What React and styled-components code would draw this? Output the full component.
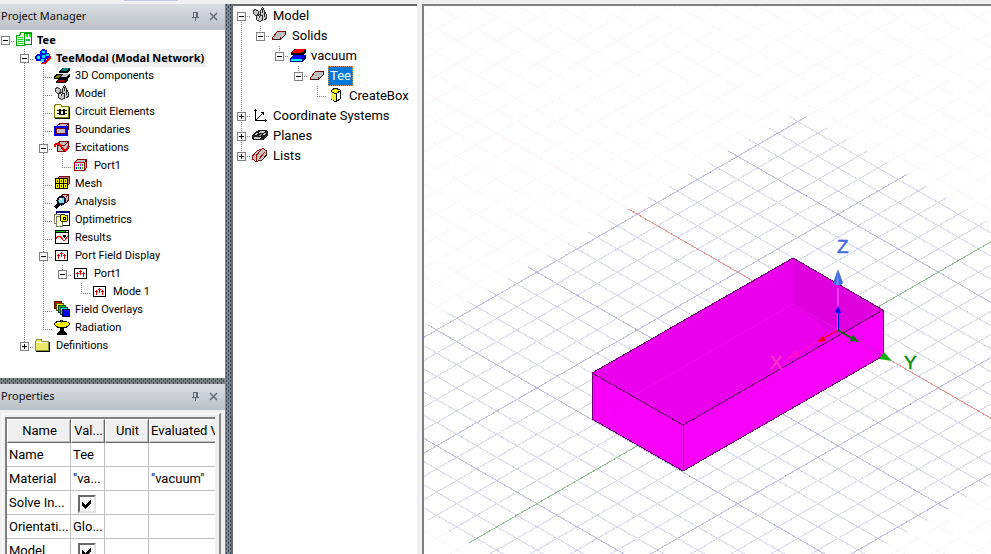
import React from "react";
import styled, { createGlobalStyle, css } from "styled-components";

const GlobalStyle = createGlobalStyle`
  * { box-sizing: border-box; }
  html, body { margin: 0; padding: 0; }
  body { background: #f0f0f0; color: #000; overflow: hidden; }
`;

const titleFont = `"Noto Sans", "Open Sans", sans-serif`;
const uiFont = `Roboto, "Noto Sans", sans-serif`;

const Shell = styled.div`
  display: flex;
  flex-direction: column;
  height: 100vh;
  overflow: hidden;
  background: #f0f0f0;
  font-family: ${uiFont};
`;

const TopStrip = styled.header`
  flex: 0 0 4px;
  padding-left: 124px;
`;

const TopStripTab = styled.div`
  width: 54px;
  height: 1px;
  background: #c5cae2;
`;

const Workspace = styled.main`
  flex: 1;
  min-height: 0;
  display: flex;
`;

const Dock = styled.div`
  flex: 0 0 225px;
  min-width: 0;
  display: flex;
  flex-direction: column;
`;

const Splitter = styled.div`
  flex: 0 0 6px;
  background-color: #808588;
  background-image:
    conic-gradient(from 270deg at 1px 2px, #34465c 25%, transparent 0),
    conic-gradient(from 270deg at 1px 2px, #34465c 25%, transparent 0);
  background-size: 4px 4px;
  background-position: 1px 0, 3px 2px;
`;

const Panel = styled.section`
  flex: ${(p) => (p.$height ? `0 0 ${p.$height}px` : "1")};
  min-height: 0;
  display: flex;
  flex-direction: column;
  overflow: hidden;
`;

const PanelTitle = styled.div`
  flex: 0 0 26px;
  display: flex;
  align-items: center;
  gap: 7px;
  padding: 0 6px 2px 1px;
  background: linear-gradient(#dadde1, #bcc1c6);
`;

const PanelHeading = styled.h2`
  flex: 1;
  margin: 0;
  font-family: ${titleFont};
  font-size: 11px;
  font-weight: 400;
  line-height: 18px;
  color: #101010;
  white-space: nowrap;
`;

const TitleButton = styled.button`
  display: flex;
  width: 11px;
  height: 11px;
  padding: 0;
  border: 0;
  background: none;
  align-items: center;
  justify-content: center;
`;

const ProjectBody = styled.div`
  flex: 1;
  min-height: 0;
  padding-top: 1px;
  overflow: hidden;
  background: #fff;
`;

const Tree = styled.ul`
  list-style: none;
  margin: 0 0 0 ${(p) => (p.$wide ? "-1px" : "-4px")};
  padding: 0;
  font-size: ${(p) => (p.$wide ? "13px" : "11px")};
  --row: ${(p) => (p.$wide ? "20px" : "18px")};
`;

const Branch = styled.ul`
  list-style: none;
  margin: 0;
  padding: 0;
`;

const Row = styled.div`
  display: flex;
  height: var(--row);
  line-height: var(--row);
  white-space: nowrap;
`;

const dotsV = "repeating-linear-gradient(to bottom, #808080 0 1px, transparent 1px 2px)";
const dotsH = "repeating-linear-gradient(to right, #808080 0 1px, transparent 1px 2px)";

const guideImages = {
  none: css`background-image: none;`,
  line: css`
    background-image: ${dotsV};
    background-size: 1px 100%;
    background-position: 9px 0;
  `,
  dash: css`
    background-image: ${dotsH};
    background-size: 10px 1px;
    background-position: 9px 10px;
  `,
  tee: css`
    background-image: ${dotsV}, ${dotsH};
    background-size: 1px 100%, 10px 1px;
    background-position: 9px 0, 9px 10px;
  `,
  end: css`
    background-image: ${dotsV}, ${dotsH};
    background-size: 1px 10px, 10px 1px;
    background-position: 9px 0, 9px 10px;
  `,
  start: css`
    background-image: ${dotsV}, ${dotsH};
    background-size: 1px 10px, 10px 1px;
    background-position: 9px 10px, 9px 10px;
  `,
};

const Guide = styled.span`
  flex: 0 0 19px;
  display: flex;
  align-items: center;
  justify-content: center;
  padding-top: 1px;
  background-repeat: no-repeat;
  ${(p) => guideImages[p.$kind]}
`;

const Toggle = styled.button`
  display: flex;
  width: 9px;
  height: 9px;
  padding: 0;
  border: 1px solid #808080;
  background: #fff;
`;

const IconSlot = styled.span`
  flex: 0 0 20px;
  display: flex;
  align-items: center;
  padding: 0 0 2px 1px;
`;

const Label = styled.span`
  padding: 0 2px;
  font-family: ${(p) => (p.$bold ? titleFont : "inherit")};
  font-weight: ${(p) => (p.$bold ? 700 : 400)};
  background: ${(p) => (p.$tint ? "#f0f0f0" : "transparent")};
  ${(p) =>
    p.$selected &&
    css`
      background: #0078d7;
      color: #fff;
      outline: 1px dotted #e08a3c;
      outline-offset: -1px;
    `}
`;

/* ---------- tree icons, drawn on a 16 x 16 pixel grid ---------- */

const Sprite = ({ children }) => (
  <svg width="16" height="16" viewBox="0 0 16 16" shapeRendering="crispEdges" aria-hidden="true">
    {children}
  </svg>
);

const R = ({ x, y, w, h, f }) => <rect x={x} y={y} width={w} height={h} fill={f} />;

const Slab = () => (
  <>
    <path d="M1 12 L6 4 H14 V8 L10 13 H1Z" fill="#c0c0c0" />
    <path d="M1.5 12.5 V10.5 L6.5 4.5 H14.5" stroke="#800000" fill="none" />
    <path d="M1.5 12.5 H9.5 L14.5 7.5 V4.5" stroke="#202020" fill="none" />
    <path d="M9.5 12 V10" stroke="#800000" fill="none" />
  </>
);

const CrossPort = () => (
  <>
    <rect x="1.5" y="3.5" width="12" height="10" fill="#fff" stroke="#000" />
    <path d="M4.5 7 V12 M7.5 5 V10 M10.5 7 V12 M3 8.5 H6 M6 6.5 H9 M9 8.5 H12" stroke="#e00000" fill="none" />
  </>
);

const Rocks = () => (
  <>
    <path d="M1 3 L4 2 L7 4 L9 3 L11 0 L13 4 L15 8 L15 12 L12 13 L10 14 L7 15 L4 13 L4 9 L1 6Z" fill="#c4c4c4" />
    <path d="M1.5 3.5 L3.5 2.5 L6.5 4.5 L6.5 7.5 L3.5 8.5 L1.5 6.5Z" fill="none" stroke="#404040" />
    <path d="M10.5 0 L14.5 8 V11.5 L12.5 12.5 M10.5 0 L8.5 4 V9 M10.5 2 V6 M12.5 5 V10" fill="none" stroke="#303030" />
    <path d="M4.5 9 V12.5 L7.5 14.5 L10.5 13.5 V8.5 L7.5 7.5Z M7.5 9 V11" fill="none" stroke="#303030" />
    <R x={2} y={4} w={1} h={1} f="#fff" /><R x={6} y={9} w={1} h={2} f="#fff" />
  </>
);

const Icons = {
  project: () => (
    <>
      <path d="M4.5 2.5 H15.5 V13.5 H8" fill="#fff" stroke="#008000" />
      <path d="M.5 4.5 H3 L4.5 3 V1.5 H8.5 V14.5 H.5Z" fill="#e8ffe8" stroke="#00a000" />
      <R x={8} y={1} w={8} h={1} f="#00b000" />
      <R x={10} y={3} w={2} h={3} f="#00ff00" /><R x={13} y={3} w={2} h={3} f="#00ff00" />
      <R x={10} y={8} w={4} h={2} f="#00c040" /><R x={2} y={6} w={5} h={1} f="#00d000" />
      <R x={2} y={8} w={5} h={1} f="#00d000" /><R x={2} y={10} w={5} h={1} f="#00d000" />
      <R x={2} y={12} w={5} h={1} f="#00d000" />
    </>
  ),
  design: () => (
    <>
      <path d="M5 15 L10 15 L16 10 V7 L11 11Z" fill="#ff0000" />
      <path d="M0 7 L3 5 L5 5 L5 2 L8 0 L12 1 V4 L15 5 V9 L11 10 V13 L7 14 L5 12 H1Z" fill="#0000ff" />
      <R x={2} y={7} w={3} h={3} f="#00ffff" /><R x={7} y={6} w={3} h={3} f="#00e0ff" />
      <R x={7} y={2} w={3} h={2} f="#00ffff" /><R x={11} y={5} w={3} h={2} f="#00e0ff" />
      <R x={6} y={10} w={3} h={3} f="#00ffff" />
    </>
  ),
  components: () => (
    <>
      <path d="M5 4 L8 1 H16 V4 L13 6 H5Z" fill="#000" /><path d="M6 4 L9 1 H15 L12 4Z" fill="#008080" />
      <path d="M0 9 L3 7 H16 V10 L13 12 H0Z" fill="#000" />
      <path d="M1 10 L3 8 H7 L5 11 H1Z" fill="#808000" /><path d="M7 10 L9 7 H15 L13 10Z" fill="#c0c0c0" />
      <path d="M2 14 L4 12 H14 V14 L11 16 H2Z" fill="#000" /><R x={4} y={13} w={7} h={2} f="#a00000" />
    </>
  ),
  rocks: Rocks,
  circuit: () => (
    <>
      <path d="M.5 14.5 V2.5 L2.5 1.5 H6.5 L8 3.5 H14.5 V14.5Z" fill="#ffffd0" stroke="#808000" />
      <path d="M1 15.5 H15.5 V4" fill="none" stroke="#000" />
      <R x={5} y={6} w={2} h={6} f="#000" /><R x={9} y={6} w={2} h={6} f="#000" /><R x={7} y={7} w={2} h={5} f="#000" />
      <R x={7} y={8} w={2} h={3} f="#fff" />
      <R x={3} y={7} w={2} h={1} f="#000" /><R x={3} y={10} w={2} h={1} f="#000" />
      <R x={11} y={7} w={2} h={1} f="#000" /><R x={11} y={10} w={2} h={1} f="#000" />
    </>
  ),
  boundary: () => (
    <>
      <path d="M2 6 L6 2 H15 V8 L11 12 H2Z" fill="#c0c0c0" />
      <path d="M2 6 L6 2.5 H14.5 V8 L12 11 M11 6 L14.5 2.5" fill="none" stroke="#800000" />
      <rect x="1" y="6" width="12" height="8" fill="#c08080" stroke="#0000e0" strokeWidth="2" />
      <rect x="2.5" y="7.5" width="9" height="5" fill="#c0c0c0" stroke="#800000" />
    </>
  ),
  excitation: () => (
    <>
      <path d="M3 5 L6 2 H15 V9 L12 12 H3Z" fill="#c0c0c0" />
      <path d="M3 5 L6 2.5 H14.5 V9 L12 12 H3 V6 H11 L14 3" fill="none" stroke="#800000" />
      <path d="M0 8 L2 5 H5 L10 11 H12 L15 7" fill="none" stroke="#f00000" strokeWidth="2" />
    </>
  ),
  port: () => (
    <>
      <path d="M1 5 L4 2 H14 V10 L11 13 H1Z" fill="#c0c0c0" />
      <path d="M1.5 5.5 L4.5 2.5 H13.5 V10.5 L11.5 13 M11.5 5.5 L13.5 3" fill="none" stroke="#800000" />
      <rect x="1.5" y="5.5" width="10" height="8" fill="#fff" stroke="#a00000" />
      {[3, 5, 7, 9].map((x, i) => (
        <React.Fragment key={x}>
          <R x={x} y={7} w={1} h={2} f={i % 2 ? "#00a000" : "#ff00ff"} />
          <R x={x} y={10} w={1} h={2} f={i % 2 ? "#00c000" : "#0000ff"} />
        </React.Fragment>
      ))}
    </>
  ),
  mesh: () => (
    <>
      <path d="M3 4 L6 1 H15 V9 L12 11 V4Z" fill="#c08080" stroke="#800000" />
      <R x={1} y={3} w={13} h={11} f="#000" />
      {[2, 6, 10].map((x) =>
        [4, 9].map((y) => <R key={`${x}-${y}`} x={x} y={y} w={3} h={4} f="#ffff00" />)
      )}
      {[3, 7, 11].map((x) => (
        <React.Fragment key={x}>
          <R x={x} y={5} w={1} h={2} f="#404000" /><R x={x} y={10} w={1} h={2} f="#404000" />
        </React.Fragment>
      ))}
    </>
  ),
  analysis: () => (
    <>
      <path d="M7 4 L9 1 H15 V7 L12 10 H7Z" fill="#c0c0c0" />
      <path d="M7 3.5 L9 1.5 H14.5 V7 L12 10 M12 4 L14 2" fill="none" stroke="#800000" />
      <circle cx="7.5" cy="7.5" r="4" fill="#80e0e8" stroke="#101030" strokeWidth="2" />
      <path d="M1 15 L5 11" stroke="#000" strokeWidth="3" /><R x={6} y={5} w={2} h={2} f="#fff" />
    </>
  ),
  optimetrics: () => (
    <>
      <rect x="2.5" y=".5" width="13" height="14" fill="#fff" stroke="#000" /><R x={2} y={0} w={14} h={2} f="#000080" />
      <rect x=".5" y="3.5" width="6" height="9" fill="#ffffd8" stroke="#808060" />
      <rect x="2.5" y="5.5" width="6" height="10" fill="#ffffd8" stroke="#808060" />
      <path d="M9 3 L11 4 L13 4 L14 7 L13 10 L10 11 L7 10 L6 7 L7 4Z" fill="#ffff00" stroke="#202000" />
      <rect x="9.5" y="6.5" width="2" height="2" fill="#fff" stroke="#000" />
    </>
  ),
  results: () => (
    <>
      <rect x="1.5" y="1.5" width="13" height="13" fill="#fff" stroke="#000" />
      <R x={1} y={1} w={14} h={3} f="#000" /><R x={2} y={2} w={9} h={1} f="#00c000" /><R x={12} y={2} w={2} h={1} f="#fff" />
      <path d="M2 10 L4 7 H6 L9 11 H11 L14 7" fill="none" stroke="#f00000" />
      <R x={9} y={6} w={3} h={2} f="#000" /><R x={10} y={8} w={1} h={1} f="#000" />
    </>
  ),
  portField: CrossPort,
  overlays: () => (
    <>
      <R x={0} y={0} w={8} h={8} f="#600000" /><R x={1} y={1} w={6} h={6} f="#d00000" />
      <R x={2} y={2} w={8} h={8} f="#505000" /><R x={3} y={3} w={6} h={6} f="#ffff00" />
      <R x={4} y={4} w={8} h={8} f="#004000" /><R x={5} y={5} w={6} h={6} f="#00e000" />
      <R x={6} y={6} w={8} h={8} f="#004040" /><R x={7} y={7} w={6} h={6} f="#00ffff" />
      <R x={8} y={8} w={8} h={8} f="#000030" /><R x={9} y={9} w={6} h={6} f="#0000ff" />
    </>
  ),
  radiation: () => (
    <>
      <path d="M0 4 L3 2 H6 V1 H9 V2 H12 L16 4 V6 L12 9 H10 V12 L13 14 V16 H3 V14 L6 12 V9 H4 L0 6Z" fill="#000" />
      <path d="M1 4 L4 3 H12 L15 4 V6 L11 8 H5 L1 6Z" fill="#f8f000" /><R x={3} y={3} w={3} h={1} f="#fff" /><R x={7} y={1} w={1} h={3} f="#606000" />
    </>
  ),
  folder: () => (
    <>
      <path d="M.5 13.5 V4.5 L2 2.5 H6 L7.5 4.5 H13.5 V13.5Z" fill="#e8e868" stroke="#909030" />
      <path d="M1 14.5 H14.5 V5" fill="none" stroke="#000" /><path d="M1 5.5 H13" stroke="#fff" />
    </>
  ),
  slab: Slab,
  material: () => (
    <>
      <path d="M1 6 L4 2 H16 V5 L13 8 H1Z" fill="#000" /><path d="M2 6 L5 2 H15 L12 6 H2Z" fill="#ff0000" />
      <path d="M0 12 L3 8 H16 V11 L13 15 H0Z" fill="#000080" /><path d="M1 11 L4 8 H15 L12 12 H1Z" fill="#0000ff" />
      <R x={1} y={12} w={11} h={2} f="#00ffff" />
    </>
  ),
  box: () => (
    <>
      <path d="M3 4 L7 1 L12 3 V12 L8 15 L3 12Z" fill="#ffff00" stroke="#000" />
      <path d="M3 5 L7 7 V14 L3 12Z" fill="#f0f040" /><path d="M8 7 L12 4 V12 L8 15Z" fill="#fff" stroke="#000" />
      <path d="M3 4.5 L8 7 V15" fill="none" stroke="#000" />
    </>
  ),
  axes: () => (
    <>
      <path d="M3.5 2 V13.5 H15" fill="none" stroke="#000" />
      <R x={2} y={3} w={3} h={1} f="#000" /><R x={13} y={12} w={1} h={3} f="#000" />
      <path d="M4 13 L11 6" fill="none" stroke="#000" /><path d="M8 5 H12 V9Z" fill="#000" />
    </>
  ),
  planes: () => (
    <>
      <path d="M0 9 L3 5 L7 3 H15 L16 5 V8 L12 13 H1 L0 11Z" fill="#202020" />
      <path d="M2 8 L4 6 H6 L5 8Z M7 6 L8 4 H13 L11 6Z M10 8 L12 6 H15 L12 8Z M2 10 H9 L8 12 H2Z" fill="#c8c8c8" />
      <path d="M6 9 L8 7 H10 L9 9Z" fill="#888" />
    </>
  ),
  lists: () => (
    <>
      <path d="M1 8 L5 3 L11 1 L15 4 V8 L10 13 L4 15 L1 12Z" fill="#c8c0c0" />
      <path d="M.5 9 L5 4 L11 1.5 L14.5 4 M.5 9 V12 L4 14.5 M4 9 L9 2.5 M4 9 V14 M7 12 L13 5" stroke="#901010" fill="none" />
      <path d="M4 14.5 L10 13 L14.5 8 V4" stroke="#502020" fill="none" />
    </>
  ),
};

/* ---------- tree data ---------- */

const projectTree = [
  {
    label: "Tee", icon: "project", bold: true, open: true,
    children: [
      {
        label: "TeeModal (Modal Network)", icon: "design", bold: true, tint: true, open: true,
        children: [
          { label: "3D Components", icon: "components" },
          { label: "Model", icon: "rocks" },
          { label: "Circuit Elements", icon: "circuit" },
          { label: "Boundaries", icon: "boundary" },
          { label: "Excitations", icon: "excitation", open: true, children: [{ label: "Port1", icon: "port" }] },
          { label: "Mesh", icon: "mesh" },
          { label: "Analysis", icon: "analysis" },
          { label: "Optimetrics", icon: "optimetrics" },
          { label: "Results", icon: "results" },
          {
            label: "Port Field Display", icon: "portField", open: true,
            children: [
              { label: "Port1", icon: "portField", open: true, children: [{ label: "Mode 1", icon: "portField" }] },
            ],
          },
          { label: "Field Overlays", icon: "overlays" },
          { label: "Radiation", icon: "radiation" },
        ],
      },
      { label: "Definitions", icon: "folder", open: false },
    ],
  },
];

const modelTree = [
  {
    label: "Model", icon: "rocks", open: true,
    children: [
      {
        label: "Solids", icon: "slab", open: true,
        children: [
          {
            label: "vacuum", icon: "material", open: true,
            children: [
              { label: "Tee", icon: "slab", selected: true, open: true, children: [{ label: "CreateBox", icon: "box" }] },
            ],
          },
        ],
      },
    ],
  },
  { label: "Coordinate Systems", icon: "axes", open: false },
  { label: "Planes", icon: "planes", open: false },
  { label: "Lists", icon: "lists", open: false },
];

function joint(index, count, isRoot) {
  if (isRoot && count === 1) return "dash";
  if (isRoot && index === 0) return "start";
  return index === count - 1 ? "end" : "tee";
}

function TreeNode({ node, index, count, trail }) {
  const Art = Icons[node.icon];
  const last = index === count - 1;
  return (
    <li>
      <Row>
        {trail.map((kind, i) => (
          <Guide key={i} $kind={kind} />
        ))}
        <Guide $kind={joint(index, count, trail.length === 0)}>
          {node.open !== undefined && (
            <Toggle type="button" aria-label={`${node.open ? "Collapse" : "Expand"} ${node.label}`}>
              <svg width="7" height="7" shapeRendering="crispEdges" aria-hidden="true">
                <path d={node.open ? "M1 3.5 H6" : "M1 3.5 H6 M3.5 1 V6"} stroke="#000" />
              </svg>
            </Toggle>
          )}
        </Guide>
        <IconSlot>
          <Sprite><Art /></Sprite>
        </IconSlot>
        <Label $bold={node.bold} $tint={node.tint} $selected={node.selected}>{node.label}</Label>
      </Row>
      {node.children && (
        <Branch>
          {node.children.map((child, i) => (
            <TreeNode
              key={child.label}
              node={child}
              index={i}
              count={node.children.length}
              trail={[...trail, last ? "none" : "line"]}
            />
          ))}
        </Branch>
      )}
    </li>
  );
}

const TreeView = ({ nodes, wide, label }) => (
  <Tree $wide={wide} aria-label={label}>
    {nodes.map((n, i) => (
      <TreeNode key={n.label} node={n} index={i} count={nodes.length} trail={[]} />
    ))}
  </Tree>
);

const TitleBar = ({ children }) => (
  <PanelTitle>
    <PanelHeading>{children}</PanelHeading>
    <TitleButton type="button" aria-label={`Pin ${children}`}>
      <svg width="9" height="9" shapeRendering="crispEdges" aria-hidden="true">
        <path d="M2.5 5 V.5 H6.5 V5 M5.5 1 V5 M1 5.5 H8 M4.5 6 V9" stroke="#62686e" fill="none" />
      </svg>
    </TitleButton>
    <TitleButton type="button" aria-label={`Close ${children}`}>
      <svg width="9" height="9" aria-hidden="true">
        <path d="M1 1 L8 8 M8 1 L1 8" stroke="#666c72" strokeWidth="1.5" fill="none" />
      </svg>
    </TitleButton>
  </PanelTitle>
);

/* ---------- properties ---------- */

const PropertiesBody = styled.div`
  flex: 1;
  min-height: 0;
  display: flex;
  padding: 3px 4px 0 2px;
  overflow: hidden;
`;

const SunkenFrame = styled.div`
  flex: 1;
  min-width: 0;
  padding: 3px 4px 0 2px;
  border-style: solid;
  border-width: 1px 2px 0 1px;
  border-color: #fff #8a8a8a #fff #fff;
`;

const GridClip = styled.div`
  height: 100%;
  overflow: hidden;
  background: #fff;
  border-style: solid;
  border-width: 2px 0 0 2px;
  border-color: #808080;
`;

const PropTable = styled.table`
  width: 242px;
  table-layout: fixed;
  border-collapse: separate;
  border-spacing: 0;
  font-size: 13px;
  line-height: 20px;
`;

const HeadCell = styled.th`
  width: ${(p) => p.$width}px;
  height: 24px;
  padding: 0 0 0 1px;
  font-weight: 400;
  text-align: ${(p) => p.$align || "center"};
  white-space: nowrap;
  background: #f0f0f0;
  border-style: solid;
  border-width: 1px;
  border-color: #fff #696969 #696969 #fff;
  box-shadow: inset -1px -1px #c0c0c0;
`;

const Cell = styled.td`
  height: 24px;
  padding: 0 0 0 2px;
  white-space: nowrap;
  border-right: 1px solid #c0c0c0;
  border-bottom: 1px solid #c0c0c0;
`;

const tick =
  "url(\"data:image/svg+xml,%3Csvg xmlns='http://www.w3.org/2000/svg' width='10' height='10' shape-rendering='crispEdges'%3E%3Cpath d='M0 3 L3 6 L9 0 V4 L3 10 L0 7Z' fill='black'/%3E%3C/svg%3E\")";

const Check = styled.input`
  appearance: none;
  display: block;
  width: 18px;
  height: 18px;
  margin: 2px 0 0 5px;
  border: 2px solid;
  border-color: #696969 #e3e3e3 #e3e3e3 #696969;
  background: #fff;
  &:checked {
    background: #fff ${tick} no-repeat 2px 2px;
  }
`;

const properties = [
  { name: "Name", value: "Tee" },
  { name: "Material", value: '"va...', evaluated: '"vacuum"' },
  { name: "Solve In...", checked: true },
  { name: "Orientati...", value: "Glo..." },
  { name: "Model", checked: true },
];

const PropertyGrid = () => (
  <PropTable>
    <thead>
      <tr>
        <HeadCell $width={64}>Name</HeadCell>
        <HeadCell $width={34}>Val...</HeadCell>
        <HeadCell $width={44}>Unit</HeadCell>
        <HeadCell $width={100} $align="left">Evaluated V</HeadCell>
      </tr>
    </thead>
    <tbody>
      {properties.map((p) => (
        <tr key={p.name}>
          <Cell>{p.name}</Cell>
          <Cell>
            {p.checked ? <Check type="checkbox" defaultChecked aria-label={p.name} /> : p.value}
          </Cell>
          <Cell />
          <Cell>{p.evaluated}</Cell>
        </tr>
      ))}
    </tbody>
  </PropTable>
);

/* ---------- model tree and 3D view ---------- */

const ModelPanel = styled.section`
  flex: 0 0 186px;
  overflow: hidden;
  background: #fff;
  border-style: solid;
  border-width: 2px 0 0 2px;
  border-color: #696969 #f0f0f0 #f0f0f0 #696969;
`;

const PanelGap = styled.div`
  flex: 0 0 5px;
  background: #f0f0f0;
`;

const Viewport = styled.section`
  flex: 1;
  min-width: 0;
  display: flex;
  overflow: hidden;
  background: #fff;
  border-style: solid;
  border-width: 2px 0 0 2px;
  border-color: #808080;
`;

const Scene = styled.svg`
  flex: 1;
  min-width: 0;
  height: 100%;
  font-family: "Liberation Sans", sans-serif;
  font-size: 19px;
`;

const AxisName = styled.text`
  fill: ${(p) => p.$color};
  stroke: ${(p) => p.$color};
  stroke-width: 0.5;
`;

const OX = 414;
const OY = 324;
const at = (a, b) => [OX + (a - b) * 20.07, OY + (a + b) * 11.58];
const seg = (a1, b1, a2, b2) => `M${at(a1, b1).join(" ")} L${at(a2, b2).join(" ")}`;
const range = (from, to) => Array.from({ length: to - from + 1 }, (_, i) => from + i);

const far =
  range(-45, 45).map((n) => seg(n, -50, n, 50)).join(" ") +
  range(-45, 45).map((n) => seg(-50, n, 50, n)).join(" ");
const alongB = (list) => list.map((n) => seg(n, -8.45, n, 18.4)).join(" ");
const alongA = (list) => list.map((n) => seg(-10.45, n, 10.45, n)).join(" ");
const minor = alongB(range(-10, 10).filter((n) => n % 5)) + alongA(range(-8, 18).filter((n) => n % 5));
const major = alongB([-10, -5, 5, 10]) + alongA([-5, 5, 10, 15]);

const View3D = () => (
  <Scene role="img" aria-label="Tee box in the 3D modeler">
    <g fill="none" strokeWidth="1" shapeRendering="crispEdges">
      <path d={far} stroke="#f8f8f9" />
      <path d={seg(-30, 0, -10.45, 0)} stroke="#fdf0f0" />
      <path d={minor} stroke="#d7d7ea" />
      <path d={major} stroke="#bcbcdc" />
      <path d={seg(-10.45, 0, 10.45, 0)} stroke="#e69090" />
      <path d={seg(0, -8.45, 0, 18.4)} stroke="#92bd92" />
    </g>

    <path d="M369 252 L459 304 V350 L259 465 L169 413 V367Z" fill="#f800f8" />
    <path d="M369 252 L459 304 L259 419 L169 367Z" fill="#ea00ea" />
    <path d="M369 252 L459 304 L414 330 L369 298Z" fill="#df00df" />
    <path d="M369 252 V298 L414 324 M369 298 L169 413" fill="none" stroke="#f212f2" strokeOpacity="0.6" />
    <g fill="none" stroke="#6e006e" shapeRendering="crispEdges">
      <path d="M369 252 L459 304 V350 L259 465 L168 413 V367 Z" />
      <path d="M168 367 L259 419 L459 304 M259 419 V465" />
    </g>

    <path d="M414 324 V282" stroke="#f43cff" strokeWidth="2" />
    <path d="M414 263 L409 277 L411 279 H417 L419 277Z" fill="#4169e1" />
    <path d="M414 264 L412 279 H415Z" fill="#6690ff" />
    <path d="M414 324 V303" stroke="#0000e6" strokeWidth="1" shapeRendering="crispEdges" />
    <path d="M414 300 L411 307 H417Z" fill="#0000f0" />

    <path d="M414 324 L374 347" stroke="#ff10c8" />
    <path d="M361 354 L372 344 L376 350Z" fill="#ff0ad8" />
    <path d="M414 324 L400 332" stroke="#f00000" />
    <path d="M393 336 L399 330 L402 335Z" fill="#f00000" />

    <path d="M414 324 L456 348" stroke="#cc18d4" />
    <path d="M414 324 L429 333" stroke="#007000" strokeWidth="2" />
    <path d="M435 336 L429 329 L426 335Z" fill="#007800" />
    <path d="M468 355 L460 346 L455 353Z" fill="#10b010" />

    <AxisName x="413" y="247" $color="#4169e1">Z</AxisName>
    <AxisName x="480" y="363" $color="#109010">Y</AxisName>
    <AxisName x="346" y="363" $color="#ff30d0">X</AxisName>
  </Scene>
);

export default function App() {
  return (
    <>
      <GlobalStyle />
      <Shell>
        <TopStrip><TopStripTab /></TopStrip>
        <Workspace>
          <Dock>
            <Panel>
              <TitleBar>Project Manager</TitleBar>
              <ProjectBody>
                <TreeView nodes={projectTree} label="Project" />
              </ProjectBody>
            </Panel>
            <Splitter />
            <Panel $height={170}>
              <TitleBar>Properties</TitleBar>
              <PropertiesBody>
                <SunkenFrame>
                  <GridClip><PropertyGrid /></GridClip>
                </SunkenFrame>
              </PropertiesBody>
            </Panel>
          </Dock>
          <Splitter />
          <ModelPanel>
            <TreeView nodes={modelTree} wide label="Model history" />
          </ModelPanel>
          <PanelGap />
          <Viewport>
            <View3D />
          </Viewport>
        </Workspace>
      </Shell>
    </>
  );
}
